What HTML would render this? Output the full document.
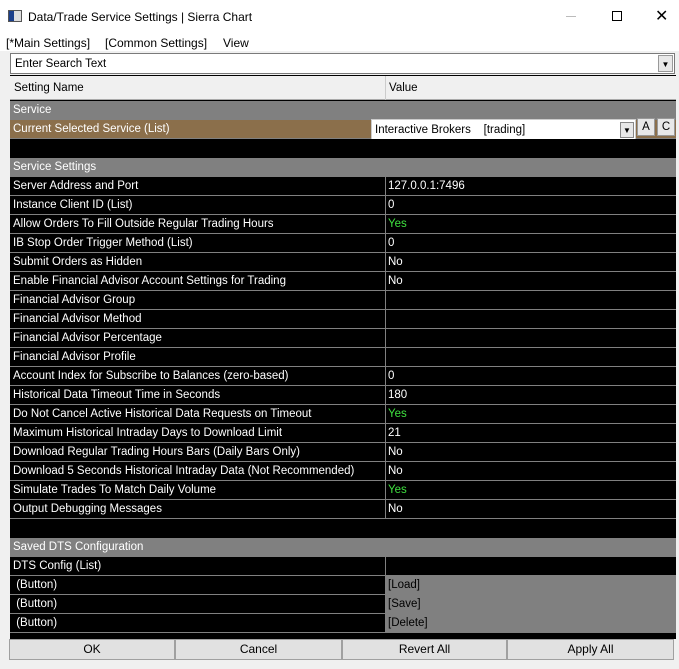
<!DOCTYPE html>
<html><head><style>
*{margin:0;padding:0;box-sizing:border-box}
body{width:679px;height:669px;background:#f0f0f0;font-family:"Liberation Sans",sans-serif;font-size:11.5px;position:relative;overflow:hidden}
.title{position:absolute;left:0;top:0;width:679px;height:33px;background:#fff;font-size:12px}
.menu{position:absolute;left:0;top:33px;width:679px;height:18px;background:#fff;font-size:12px}
.a{position:absolute}
.row{position:absolute;left:10px;width:666px;height:19px;background:#000;border-bottom:1px solid #808080;color:#fff}
.row .n{position:absolute;left:3px;top:3px;white-space:nowrap}
.row .v{position:absolute;left:375px;top:0;height:18px;width:291px;border-left:1px solid #808080;padding:3px 0 0 2px}
.grp{background:#808080;color:#fff}
.btn{position:absolute;top:639px;height:21px;background:#e1e1e1;border:1px solid #a0a0a0;text-align:center;line-height:19px;font-size:12px;color:#000}
</style></head><body>
<div class="title">
 <div class="a" style="left:8px;top:10px;width:14px;height:12px;border:1px solid #555;background:linear-gradient(90deg,#1b3f8a 0 40%,#ddd 40%)"></div>
 <div class="a" style="left:28px;top:10px">Data/Trade Service Settings | Sierra Chart</div>
 <div class="a" style="left:566px;top:16px;width:10px;height:1px;background:#bbb"></div>
 <div class="a" style="left:612px;top:11px;width:10px;height:10px;border:1px solid #000"></div>
 <div class="a" style="left:655px;top:6px;font-size:16px">✕</div>
</div>
<div class="menu"><span class="a" style="left:6px;top:3px">[*Main Settings]</span><span class="a" style="left:105px;top:3px">[Common Settings]</span><span class="a" style="left:223px;top:3px">View</span></div>
<div class="a" style="left:10px;top:53px;width:665px;height:21px;background:#fff;border:1px solid #7a7a7a"><span class="a" style="left:4px;top:4px">Enter Search Text</span><div class="a" style="right:1px;top:1px;width:15px;height:17px;background:#e8e8e8;border:1px solid #999;font-size:8px;text-align:center;line-height:17px">▼</div></div>
<div class="a" style="left:10px;top:75px;width:666px;height:564px;background:#000"></div>
<div class="a" style="left:10px;top:76px;width:666px;height:24px;background:#f0f0f0;border-bottom:1px solid #aaa"><span class="a" style="left:4px;top:6px">Setting Name</span><div class="a" style="left:375px;top:0;width:1px;height:24px;background:#ccc"></div><span class="a" style="left:379px;top:6px">Value</span></div>
<div class="row grp" style="top:101px"><span class="n">Service</span></div>
<div class="row" style="top:120px;background:#8b6f4b"><span class="n">Current Selected Service (List)</span></div>
<div class="a" style="left:371px;top:119px;width:265px;height:21px;background:#fff;border:1px solid #ccc"><span class="a" style="left:3px;top:4px">Interactive Brokers&nbsp;&nbsp;&nbsp;&nbsp;[trading]</span><div class="a" style="right:1px;top:2px;width:14px;height:16px;background:#e8e8e8;border:1px solid #888;font-size:8px;text-align:center;line-height:16px">▼</div></div>
<div class="a" style="left:637px;top:118px;width:18px;height:18px;background:#e8e8e8;border:1px solid #999;text-align:center;line-height:16px">A</div>
<div class="a" style="left:657px;top:118px;width:18px;height:18px;background:#e8e8e8;border:1px solid #999;text-align:center;line-height:16px">C</div>
<div class="row" style="top:139px;border:none"></div>
<div class="row grp" style="top:158px"><span class="n">Service Settings</span></div>
<div class="row" style="top:177px"><span class="n">Server Address and Port</span><span class="v">127.0.0.1:7496</span></div>
<div class="row" style="top:196px"><span class="n">Instance Client ID (List)</span><span class="v">0</span></div>
<div class="row" style="top:215px"><span class="n">Allow Orders To Fill Outside Regular Trading Hours</span><span class="v" style="color:#3fe03f">Yes</span></div>
<div class="row" style="top:234px"><span class="n">IB Stop Order Trigger Method (List)</span><span class="v">0</span></div>
<div class="row" style="top:253px"><span class="n">Submit Orders as Hidden</span><span class="v">No</span></div>
<div class="row" style="top:272px"><span class="n">Enable Financial Advisor Account Settings for Trading</span><span class="v">No</span></div>
<div class="row" style="top:291px"><span class="n">Financial Advisor Group</span><span class="v"></span></div>
<div class="row" style="top:310px"><span class="n">Financial Advisor Method</span><span class="v"></span></div>
<div class="row" style="top:329px"><span class="n">Financial Advisor Percentage</span><span class="v"></span></div>
<div class="row" style="top:348px"><span class="n">Financial Advisor Profile</span><span class="v"></span></div>
<div class="row" style="top:367px"><span class="n">Account Index for Subscribe to Balances (zero-based)</span><span class="v">0</span></div>
<div class="row" style="top:386px"><span class="n">Historical Data Timeout Time in Seconds</span><span class="v">180</span></div>
<div class="row" style="top:405px"><span class="n">Do Not Cancel Active Historical Data Requests on Timeout</span><span class="v" style="color:#3fe03f">Yes</span></div>
<div class="row" style="top:424px"><span class="n">Maximum Historical Intraday Days to Download Limit</span><span class="v">21</span></div>
<div class="row" style="top:443px"><span class="n">Download Regular Trading Hours Bars (Daily Bars Only)</span><span class="v">No</span></div>
<div class="row" style="top:462px"><span class="n">Download 5 Seconds Historical Intraday Data (Not Recommended)</span><span class="v">No</span></div>
<div class="row" style="top:481px"><span class="n">Simulate Trades To Match Daily Volume</span><span class="v" style="color:#3fe03f">Yes</span></div>
<div class="row" style="top:500px"><span class="n">Output Debugging Messages</span><span class="v">No</span></div>
<div class="row" style="top:519px;border:none"></div>
<div class="row grp" style="top:538px"><span class="n">Saved DTS Configuration</span></div>
<div class="row" style="top:557px"><span class="n">DTS Config (List)</span><span class="v"></span></div>
<div class="row" style="top:576px"><span class="n">&nbsp;(Button)</span><span class="v" style="background:#808080;color:#000">[Load]</span></div>
<div class="row" style="top:595px"><span class="n">&nbsp;(Button)</span><span class="v" style="background:#808080;color:#000">[Save]</span></div>
<div class="row" style="top:614px"><span class="n">&nbsp;(Button)</span><span class="v" style="background:#808080;color:#000">[Delete]</span></div>
<div class="btn" style="left:9px;width:166px">OK</div>
<div class="btn" style="left:175px;width:167px">Cancel</div>
<div class="btn" style="left:342px;width:165px">Revert All</div>
<div class="btn" style="left:507px;width:167px">Apply All</div>
</body></html>
